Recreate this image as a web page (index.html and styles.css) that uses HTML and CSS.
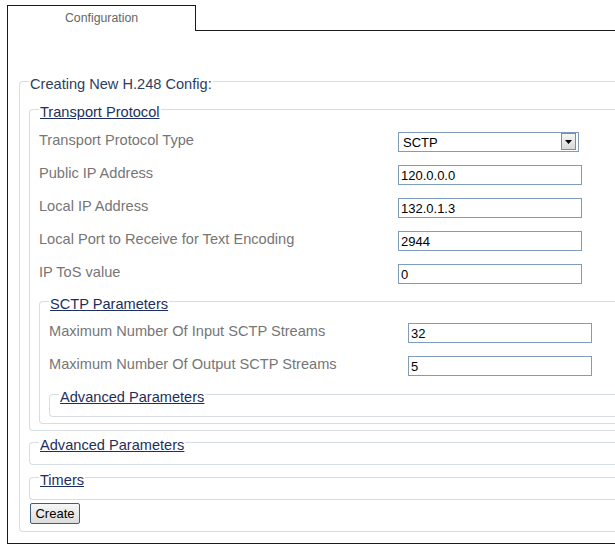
FILE: index.html
```html
<!DOCTYPE html>
<html>
<head>
<meta charset="utf-8">
<link rel="stylesheet" href="styles.css">
</head>
<body>
<div class="tabbar">
  <div class="tab">Configuration</div>
  <div class="tab-fill"></div>
</div>
<div class="panel">
  <fieldset class="fs fs-outer">
    <legend class="legend-title">Creating New H.248 Config:</legend>
    <fieldset class="fs fs-transport">
      <legend><a href="#" class="legend-link">Transport Protocol</a></legend>
      <div class="rows">
        <label class="lbl">Transport Protocol Type</label>
        <div class="select-wrap">
          <select class="sel"><option>SCTP</option></select>
          <span class="sel-btn"><svg width="7" height="4" viewBox="0 0 7 4"><path d="M0 0H7L3.5 4Z" fill="#000"/></svg></span>
        </div>
        <label class="lbl">Public IP Address</label>
        <input class="txt" type="text" value="120.0.0.0">
        <label class="lbl">Local IP Address</label>
        <input class="txt" type="text" value="132.0.1.3">
        <label class="lbl">Local Port to Receive for Text Encoding</label>
        <input class="txt" type="text" value="2944">
        <label class="lbl">IP ToS value</label>
        <input class="txt" type="text" value="0">
      </div>
      <fieldset class="fs fs-sctp">
        <legend><a href="#" class="legend-link">SCTP Parameters</a></legend>
        <div class="rows">
          <label class="lbl">Maximum Number Of Input SCTP Streams</label>
          <input class="txt" type="text" value="32">
          <label class="lbl">Maximum Number Of Output SCTP Streams</label>
          <input class="txt" type="text" value="5">
        </div>
        <fieldset class="fs fs-collapsed fs-nested">
          <legend><a href="#" class="legend-link">Advanced Parameters</a></legend>
        </fieldset>
      </fieldset>
    </fieldset>
    <fieldset class="fs fs-collapsed">
      <legend><a href="#" class="legend-link">Advanced Parameters</a></legend>
    </fieldset>
    <fieldset class="fs fs-collapsed fs-timers">
      <legend><a href="#" class="legend-link">Timers</a></legend>
    </fieldset>
    <button class="btn" type="button">Create</button>
  </fieldset>
</div>
</body>
</html>
```
FILE: styles.css
```css
html, body {
  margin: 0;
  padding: 0;
  background: #ffffff;
  overflow: hidden;
}

body {
  font-family: "Liberation Sans", Arial, sans-serif;
}

.tabbar {
  display: flex;
  padding: 5px 0 0 7px;
}

.tab {
  box-sizing: border-box;
  width: 189px;
  height: 26px;
  border: 1px solid #1a1a1a;
  border-bottom: none;
  text-align: center;
  font-size: 12.3px;
  line-height: 24px;
  color: #666666;
}

.tab-fill {
  flex: 1;
  box-sizing: border-box;
  height: 26px;
  border-bottom: 1px solid #1a1a1a;
}

.panel {
  box-sizing: border-box;
  margin-left: 7px;
  border-left: 1px solid #1a1a1a;
  border-bottom: 1px solid #1a1a1a;
  padding: 39px 0 11px 0;
}

.fs {
  margin: 0;
  min-width: 0;
  border: 1px solid #d6dde4;
  border-right: none;
  border-radius: 4px 0 0 4px;
  padding: 0 0 6px 9px;
}

.fs legend {
  padding: 6px 1px 0 1px;
  font-size: 14.6px;
  line-height: 17px;
}

.fs-outer {
  margin-left: 11px;
  padding-top: 5px;
  padding-bottom: 7px;
}

.legend-title {
  color: #2e3d5f;
}

.legend-link {
  color: #1d2f5c;
  text-decoration: underline;
}

.fs-transport {
  padding-top: 11px;
}

.fs-sctp {
  margin-top: 6px;
  padding-top: 10px;
}

.fs-collapsed {
  padding-bottom: 10px;
}

.fs-nested {
  margin-top: 7px;
}

.fs-timers {
  margin-top: 1px;
}

.rows {
  display: grid;
  grid-template-columns: 359px auto;
  row-gap: 13px;
  align-items: start;
  justify-items: start;
}

.lbl {
  font-size: 14.6px;
  line-height: 17px;
  color: #767676;
}

.txt {
  box-sizing: border-box;
  width: 184px;
  height: 20px;
  margin: 0;
  padding: 0 2px;
  border: 1px solid #7f9db9;
  border-radius: 0;
  background: #ffffff;
  font-family: "Liberation Sans", Arial, sans-serif;
  font-size: 13px;
  color: #000000;
  outline: none;
}

.select-wrap {
  position: relative;
  width: 181px;
  height: 20px;
}

.sel {
  box-sizing: border-box;
  width: 181px;
  height: 20px;
  margin: 0;
  padding: 0 0 0 4px;
  border: 1px solid #7f9db9;
  border-radius: 0;
  background: #ffffff;
  appearance: none;
  -webkit-appearance: none;
  font-family: "Liberation Sans", Arial, sans-serif;
  font-size: 13px;
  color: #000000;
  outline: none;
}

.sel-btn {
  position: absolute;
  top: 1px;
  right: 3px;
  box-sizing: border-box;
  width: 15px;
  height: 17px;
  border: 1px solid #8a8a8a;
  background: linear-gradient(#f6f6f6, #d9d9d9);
  display: flex;
  align-items: center;
  justify-content: center;
  pointer-events: none;
}

.btn {
  display: block;
  box-sizing: border-box;
  margin: 3px 0 0 1px;
  width: 50px;
  height: 21px;
  padding: 0;
  border: 1px solid #3f5d7c;
  border-radius: 2px;
  background: linear-gradient(#f7f7f7, #dcdcdc);
  font-family: "Liberation Sans", Arial, sans-serif;
  font-size: 13px;
  color: #000000;
}
```
